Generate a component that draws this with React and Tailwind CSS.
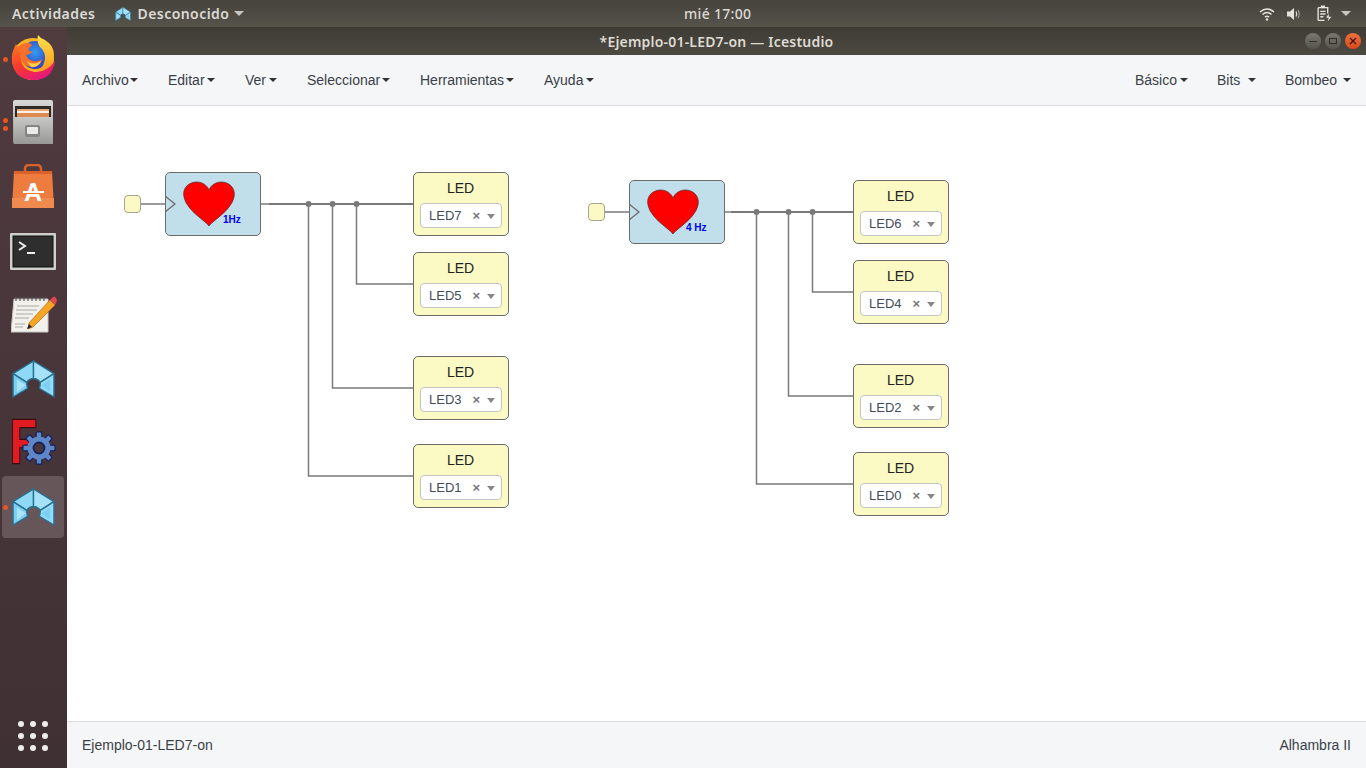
import React from 'react';

function IceLogo({ className }) {
  return (
    <svg viewBox="0 0 44 39" className={className}>
      <g stroke="#2a6f8f" strokeWidth="1.4" strokeLinejoin="round">
        <path d="M22 1 L1 14 L15 23 Q18 19 22 19 Z" fill="#8fd9f6" />
        <path d="M22 1 L43 14 L29 23 Q26 19 22 19 Z" fill="#a5e2f9" />
        <path d="M1 14 L1 38 L16 29 Q15 26 15 23 Z" fill="#7ccff2" />
        <path d="M43 14 L43 38 L28 29 Q29 26 29 23 Z" fill="#93dcf7" />
      </g>
      <path d="M5 33 L14 26 L5 20 Z" fill="#a8e4fa" />
      <path d="M39 33 L30 26 L39 20 Z" fill="#7ccff2" />
    </svg>
  );
}

function Firefox() {
  return (
    <svg viewBox="0 0 44 46" className="w-[44px] h-[46px] mb-[3px]">
      <defs>
        <linearGradient id="ffOuter" x1="0" y1="0" x2="0.6" y2="1">
          <stop offset="0" stopColor="#ff7a1f" />
          <stop offset="0.55" stopColor="#f9382f" />
          <stop offset="1" stopColor="#e5187a" />
        </linearGradient>
        <linearGradient id="ffFlame" x1="0" y1="0" x2="0" y2="1">
          <stop offset="0" stopColor="#ffe14a" />
          <stop offset="1" stopColor="#ff9a1a" />
        </linearGradient>
        <radialGradient id="ffBlue" cx="0.5" cy="0.4" r="0.6">
          <stop offset="0" stopColor="#2f9df4" />
          <stop offset="1" stopColor="#3a3bb8" />
        </radialGradient>
      </defs>
      <circle cx="22" cy="24" r="21" fill="#ffb321" />
      <path d="M5 9 Q0 18 1 26 Q3 45 23 45 Q41 45 44 26 Q35 38 23 37 Q11 35 10 24 Q9 15 5 9 Z" fill="url(#ffOuter)" />
      <circle cx="24" cy="20" r="14" fill="url(#ffBlue)" />
      <path d="M27 0 Q25 9 31 14 Q36 20 33 28 Q31 34 25 35 Q37 36 41 28 Q47 13 34 5 Q29 3 27 0 Z" fill="url(#ffFlame)" />
      <path d="M6 13 Q10 8 17 8 Q20 8 21 11 Q16 13 18 16 L22 17 Q18 20 15 20 Q17 25 22 26 Q28 27 31 24 Q29 32 21 32 Q12 31 10 24 Q9 18 6 13 Z" fill="#f7702a" />
      <path d="M16 26 Q22 31 30 26 Q27 33 20 32 Z" fill="#ffd24a" />
    </svg>
  );
}

function Files() {
  return (
    <svg viewBox="0 0 44 46" className="w-[44px] h-[46px]">
      <defs>
        <linearGradient id="cabTop" x1="0" y1="0" x2="0" y2="1">
          <stop offset="0" stopColor="#d9d9d7" />
          <stop offset="1" stopColor="#8e8e8c" />
        </linearGradient>
        <linearGradient id="cabFront" x1="0" y1="0" x2="0" y2="1">
          <stop offset="0" stopColor="#c8c8c6" />
          <stop offset="1" stopColor="#989896" />
        </linearGradient>
      </defs>
      <rect x="2" y="0" width="40" height="44" rx="2" fill="url(#cabTop)" />
      <rect x="4" y="6" width="36" height="12" fill="#2d2a28" />
      <rect x="6" y="9" width="32" height="2" fill="#e9a872" />
      <rect x="6" y="11" width="32" height="2" fill="#f6f3ee" />
      <rect x="6" y="13" width="32" height="4" fill="#dd8a50" />
      <path d="M4 17 L40 17 L42 19 L42 44 L3 44 L3 19 Z" fill="url(#cabFront)" />
      <rect x="14" y="25" width="15" height="12" rx="2" fill="#858583" />
      <rect x="16" y="27" width="11" height="7" rx="1" fill="#ecebe9" />
    </svg>
  );
}

function Store() {
  return (
    <svg viewBox="0 0 44 46" className="w-[44px] h-[46px]">
      <path d="M14 10 V5 Q14 1 18 1 H26 Q30 1 30 5 V10" fill="none" stroke="#d9622b" strokeWidth="2.5" />
      <path d="M3 7 H41 L43 44 H1 Z" fill="#ee7c3e" />
      <path d="M3 7 H41 L41 10 H3 Z" fill="#d9622b" />
      <rect x="1" y="34" width="42" height="10" fill="#f08a4f" />
      <text x="22" y="37" textAnchor="middle" fontFamily="'Liberation Sans', sans-serif" fontWeight="700" fontSize="25" fill="#ffffff">A</text>
      <rect x="12" y="27" width="21" height="2" fill="#ffffff" />
      <rect x="12" y="29" width="21" height="1" fill="#ee7c3e" />
    </svg>
  );
}

function Terminal() {
  return (
    <svg viewBox="0 0 46 38" className="w-[46px] h-[38px] mt-[2px]">
      <rect x="0" y="0" width="46" height="37" rx="1" fill="#cfcfcd" />
      <rect x="3" y="3" width="40" height="31" fill="#2e2e2e" stroke="#0f0f0f" />
      <path d="M9 9 L15 13 L9 17" fill="none" stroke="#eeeeee" strokeWidth="2" />
      <rect x="17" y="19" width="8" height="2" fill="#eeeeee" />
    </svg>
  );
}

function Notepad() {
  return (
    <svg viewBox="0 0 46 38" className="w-[46px] h-[38px] ml-[2px]">
      <path d="M3 3 H37 V36 H0 Z" fill="#f2f1ec" stroke="#c9c8c2" />
      <g stroke="#555" strokeWidth="1.2">
        {[5, 9, 13, 17, 21, 25, 29, 33].map(x => (
          <line key={x} x1={x} y1="0.5" x2={x} y2="5" />
        ))}
      </g>
      <g stroke="#aaa9a3" strokeWidth="1">
        <line x1="6" y1="10" x2="28" y2="10" />
        <line x1="5" y1="14" x2="26" y2="14" />
        <line x1="5" y1="18" x2="22" y2="18" />
        <line x1="4" y1="22" x2="18" y2="22" />
        <line x1="4" y1="28" x2="14" y2="28" />
        <line x1="4" y1="31" x2="12" y2="31" />
      </g>
      <path d="M18 27 L39 4 L44 9 L22 31 L17 33 Z" fill="#f5a623" stroke="#b8701a" strokeWidth="0.8" />
      <path d="M39 4 L42 1 Q44 0 45 2 L46 4 Q46 5 44 9 Z" fill="#e0484f" />
      <path d="M18 28 L21 31 L16 33 Z" fill="#222" />
    </svg>
  );
}

function FreeCad() {
  const teeth = [0, 45, 90, 135, 180, 225, 270, 315];
  return (
    <svg viewBox="0 0 46 46" className="w-[46px] h-[46px] overflow-visible">
      <text x="0" y="43" fontFamily="'Liberation Sans', sans-serif" fontWeight="700" fontSize="63" textLength="27" lengthAdjust="spacingAndGlyphs" fill="#e01b22" stroke="#3d0a10" strokeWidth="2.6" paintOrder="stroke">F</text>
      <g transform="translate(29 28)">
        {teeth.map(a => (
          <rect key={a} x="-2.8" y="-16" width="5.6" height="32" rx="1" fill="#5f86c6" stroke="#15235c" strokeWidth="1.1" transform={`rotate(${a})`} />
        ))}
        <circle r="11.5" fill="#5f86c6" />
        <circle r="5.5" fill="#4c3438" stroke="#15235c" strokeWidth="1.8" />
      </g>
    </svg>
  );
}

function Caret() {
  return (
    <span className="inline-block w-0 h-0 border-x-[4px] border-x-transparent border-t-[4px] border-t-[#333333]" />
  );
}

const dockApps = [
  { id: 'firefox', icon: <Firefox />, dots: 1 },
  { id: 'files', icon: <Files />, dots: 2 },
  { id: 'store', icon: <Store /> },
  { id: 'terminal', icon: <Terminal /> },
  { id: 'notepad', icon: <Notepad /> },
  { id: 'ice', icon: <IceLogo className="w-[43px] h-[38px]" /> },
  { id: 'freecad', icon: <FreeCad /> },
  { id: 'ice-active', icon: <IceLogo className="w-[43px] h-[38px]" />, dots: 1, active: true },
];

function Dock() {
  return (
    <aside className="w-[67px] shrink-0 flex flex-col bg-gradient-to-b from-[#503b3f] to-[#3f3034]">
      {dockApps.map(app => (
        <div key={app.id} className="relative h-16 flex items-center justify-center pr-[1px]">
          {app.active && <div className="absolute left-[2px] top-[1px] w-[62px] h-[62px] rounded bg-[#66565a]" />}
          <div className="relative">{app.icon}</div>
          {app.dots === 1 && <span className="absolute left-[3px] top-[30px] w-[5px] h-[5px] rounded-full bg-[#e95420]" />}
          {app.dots === 2 && (
            <span className="absolute left-[3px] top-[27px] flex flex-col gap-[3px]">
              <span className="w-[5px] h-[5px] rounded-full bg-[#e95420]" />
              <span className="w-[5px] h-[5px] rounded-full bg-[#e95420]" />
            </span>
          )}
        </div>
      ))}
      <div className="mt-auto mb-[17px] ml-[18px] grid grid-cols-3 gap-[6px] w-[30px]">
        {[1, 2, 3, 4, 5, 6, 7, 8, 9].map(n => (
          <span key={n} className="w-[6px] h-[6px] rounded-full bg-[#eeeeec]" />
        ))}
      </div>
    </aside>
  );
}

function TopBar() {
  return (
    <header className="h-[27px] shrink-0 flex items-center bg-gradient-to-b from-[#45433c] to-[#56534b] text-[#dcdad5] font-['Noto_Sans',sans-serif] text-[14px] font-semibold tracking-[0.45px]">
      <div className="w-[684px] flex items-center pl-3">
        <span>Actividades</span>
        <IceLogo className="ml-[20px] w-[16px] h-[14px]" />
        <span className="ml-[6px]">Desconocido</span>
        <span className="ml-[5px] w-0 h-0 border-x-[5px] border-x-transparent border-t-[5px] border-t-[#c8c6c1]" />
      </div>
      <span className="font-medium tracking-[0.3px]">mié 17:00</span>
      <div className="ml-auto flex items-center pr-[15px]">
        <svg viewBox="0 0 16 14" className="w-4 h-[14px]" fill="none" stroke="#e4e2dd" strokeWidth="1.6">
          <path d="M1 5 Q8 -1 15 5" />
          <path d="M3.5 7.5 Q8 3.5 12.5 7.5" />
          <path d="M6 10 Q8 8.5 10 10" />
          <circle cx="8" cy="12.5" r="1.2" fill="#e4e2dd" stroke="none" />
        </svg>
        <svg viewBox="0 0 16 14" className="ml-[11px] w-4 h-[14px]" fill="none" stroke="#e4e2dd" strokeWidth="1.2">
          <path d="M1 4.5 H4 L8 1 V13 L4 9.5 H1 Z" fill="#e4e2dd" stroke="none" />
          <path d="M10 4.5 Q11.5 7 10 9.5" />
          <path d="M12 3 Q14.5 7 12 11" stroke="#9c9a94" />
        </svg>
        <svg viewBox="0 0 14 16" className="ml-[15px] w-[15px] h-[17px]" fill="none" stroke="#e4e2dd" strokeWidth="1.3">
          <path d="M1 2.5 H10 V8 M7 14.5 H1 Z" />
          <path d="M1 2.5 V14.5" />
          <rect x="3.5" y="0.5" width="4" height="2.5" fill="#e4e2dd" stroke="none" />
          <path d="M3 6 H8 M3 8.5 H8 M3 11 H6" />
          <path d="M11 8 L8.5 12 H11 L10 15.5 L13.5 11 H11 Z" fill="#e4e2dd" stroke="none" />
        </svg>
        <span className="ml-[9px] w-0 h-0 border-x-[5px] border-x-transparent border-t-[5px] border-t-[#c8c6c1]" />
      </div>
    </header>
  );
}

function TitleBar() {
  return (
    <div className="relative h-[28px] shrink-0 flex items-center justify-center bg-gradient-to-b from-[#3e3c35] to-[#4c4a42] text-[#dfdbd2] font-['Noto_Sans',sans-serif] text-[14px] font-semibold tracking-[0.2px]">
      <span>*Ejemplo-01-LED7-on — Icestudio</span>
      <div className="absolute right-[5px] top-[6px] flex gap-1">
        <span className="w-4 h-4 rounded-full bg-gradient-to-b from-[#77766f] to-[#56554f] flex items-center justify-center">
          <span className="w-[8px] h-[1px] bg-[#2f2e2a]" />
        </span>
        <span className="w-4 h-4 rounded-full bg-gradient-to-b from-[#77766f] to-[#56554f] flex items-center justify-center">
          <span className="w-[8px] h-[6px] border border-[#2f2e2a]" />
        </span>
        <span className="w-4 h-4 rounded-full bg-gradient-to-b from-[#f0703c] to-[#d9481a] flex items-center justify-center">
          <svg viewBox="0 0 8 8" className="w-2 h-2" stroke="#3a1a0c" strokeWidth="1.3">
            <path d="M1 1 L7 7 M7 1 L1 7" />
          </svg>
        </span>
      </div>
    </div>
  );
}

const leftMenus = [
  { label: 'Archivo', w: 'w-[56px]' },
  { label: 'Editar', w: 'w-[47px]' },
  { label: 'Ver', w: 'w-[32px]' },
  { label: 'Seleccionar', w: 'w-[83px]' },
  { label: 'Herramientas', w: 'w-[94px]' },
  { label: 'Ayuda', w: 'w-[50px]' },
];
const rightMenus = [
  { label: 'Básico', w: 'w-[53px]' },
  { label: 'Bits', w: 'w-[39px]' },
  { label: 'Bombeo', w: 'w-[66px]' },
];

function MenuItem({ item }) {
  return (
    <div className={`${item.w} flex items-center justify-between`}>
      {item.label}
      <Caret />
    </div>
  );
}

function MenuBar() {
  return (
    <nav className="h-[51px] shrink-0 flex items-center justify-between px-[15px] bg-[#f5f6f8] border-b border-[#dcdde0] text-[14px] text-[#3a3f47]">
      <div className="flex gap-[30px]">
        {leftMenus.map(m => <MenuItem key={m.label} item={m} />)}
      </div>
      <div className="flex gap-[29px]">
        {rightMenus.map(m => <MenuItem key={m.label} item={m} />)}
      </div>
    </nav>
  );
}

function LedBlock({ name, pos }) {
  return (
    <div className={`absolute ${pos} w-[96px] h-[64px] rounded-[5px] border border-[#6b6b6b] bg-[#fbfac5] flex flex-col items-center`}>
      <div className="mt-[6px] pr-[1px] h-[18px] leading-[18px] text-[14px] text-[#222222]">LED</div>
      <div className="mt-[6px] w-[82px] h-[25px] rounded-[4px] border border-[#c4c4c4] bg-white flex items-center pl-2 pr-[6px] text-[13px] text-[#444c5c]">
        <span>{name}</span>
        <span className="ml-auto text-[13px] font-bold text-[#777777] leading-none">×</span>
        <span className="ml-[7px] mt-[2px] w-0 h-0 border-x-[4px] border-x-transparent border-t-[5px] border-t-[#888888]" />
      </div>
    </div>
  );
}

function ClockBlock({ pos, label, labelPos }) {
  return (
    <div className={`absolute ${pos} w-[96px] h-[64px] rounded-[5px] border border-[#6b6b6b] bg-[#c1deeb]`}>
      <svg viewBox="0 0 52 46" className="absolute left-[17px] top-[8px] w-[52px] h-[46px]">
        <path d="M26 45 C22 39 4 30 1 16 C-1 6 7 1 13.5 1 C19 1 24 4 26 9 C28 4 33 1 38.5 1 C45 1 53 6 51 16 C48 30 30 39 26 45 Z" fill="#ff0000" stroke="#5a3030" strokeWidth="0.8" />
      </svg>
      <svg viewBox="0 0 11 18" className="absolute left-[-1px] top-[22px] w-[11px] h-[18px]" fill="none" stroke="#666666" strokeWidth="1.2">
        <path d="M0 1 L10 9 L0 17" />
      </svg>
      <span className={`absolute ${labelPos} text-[10px] leading-[12px] font-bold text-[#0000ee]`}>{label}</span>
    </div>
  );
}

function Wires() {
  const w = '#7a7a7a';
  return (
    <svg className="absolute inset-0 w-full h-full" fill="none" stroke={w} strokeWidth="1.5">
      <path d="M74 98 H98" />
      <path d="M194 98 H202" />
      <path d="M202 98 H346" strokeWidth="1.8" />
      <path d="M289.5 98 V178 H346 M265.5 98 V282 H346 M241.5 98 V370 H346" />
      <circle cx="241.5" cy="98" r="3" fill={w} stroke="none" />
      <circle cx="265.5" cy="98" r="3" fill={w} stroke="none" />
      <circle cx="289.5" cy="98" r="3" fill={w} stroke="none" />

      <path d="M538 106 H562" />
      <path d="M658 106 H664" />
      <path d="M664 106 H786" strokeWidth="1.8" />
      <path d="M745.5 106 V186 H786 M721.5 106 V290 H786 M689.5 106 V378 H786" />
      <circle cx="689.5" cy="106" r="3" fill={w} stroke="none" />
      <circle cx="721.5" cy="106" r="3" fill={w} stroke="none" />
      <circle cx="745.5" cy="106" r="3" fill={w} stroke="none" />
    </svg>
  );
}

function Canvas() {
  return (
    <main className="relative flex-1 bg-white">
      <Wires />
      <div className="absolute left-[57px] top-[89px] w-[17px] h-[18px] rounded-[4px] border border-[#a5a68a] bg-[#fbfac5]" />
      <ClockBlock pos="left-[98px] top-[66px]" label="1Hz" labelPos="left-[57px] top-[41px]" />
      <LedBlock name="LED7" pos="left-[346px] top-[66px]" />
      <LedBlock name="LED5" pos="left-[346px] top-[146px]" />
      <LedBlock name="LED3" pos="left-[346px] top-[250px]" />
      <LedBlock name="LED1" pos="left-[346px] top-[338px]" />

      <div className="absolute left-[521px] top-[97px] w-[17px] h-[18px] rounded-[4px] border border-[#a5a68a] bg-[#fbfac5]" />
      <ClockBlock pos="left-[562px] top-[74px]" label="4 Hz" labelPos="left-[56px] top-[41px]" />
      <LedBlock name="LED6" pos="left-[786px] top-[74px]" />
      <LedBlock name="LED4" pos="left-[786px] top-[154px]" />
      <LedBlock name="LED2" pos="left-[786px] top-[258px]" />
      <LedBlock name="LED0" pos="left-[786px] top-[346px]" />
    </main>
  );
}

export default function App() {
  return (
    <div className="w-[1366px] h-screen overflow-hidden flex flex-col font-['Liberation_Sans',Arial,sans-serif]">
      <TopBar />
      <div className="flex-1 flex min-h-0">
        <Dock />
        <div className="flex-1 flex flex-col min-w-0">
          <TitleBar />
          <MenuBar />
          <Canvas />
          <footer className="h-[47px] shrink-0 flex items-center justify-between px-[15px] bg-[#f5f6f8] border-t border-[#dcdde0] text-[14px] text-[#3a3f47]">
            <span>Ejemplo-01-LED7-on</span>
            <span>Alhambra II</span>
          </footer>
        </div>
      </div>
    </div>
  );
}
